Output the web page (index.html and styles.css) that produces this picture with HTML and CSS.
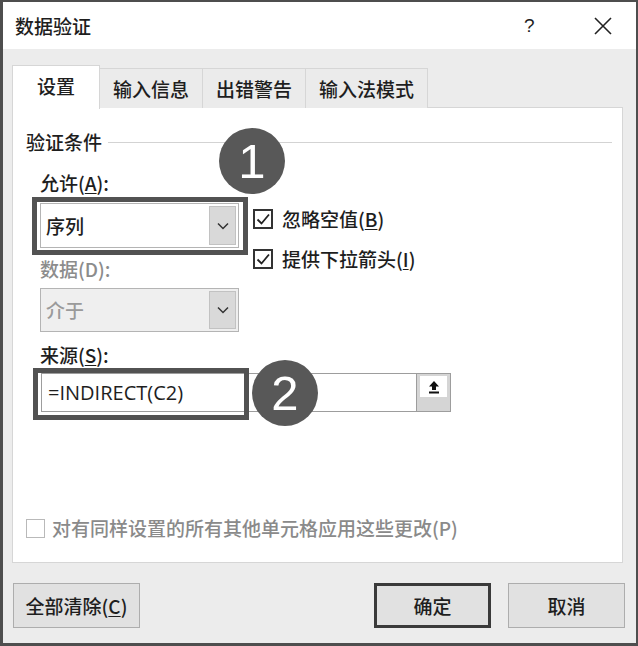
FILE: index.html
```html
<!DOCTYPE html>
<html lang="zh-CN">
<head>
<meta charset="utf-8">
<title>数据验证</title>
<link rel="stylesheet" href="styles.css">
</head>
<body>
<div class="window">
  <div class="titlebar">
    <span class="title">数据验证</span>
    <span class="help">?</span>
    <span class="close">
      <svg width="18" height="18" viewBox="0 0 18 18"><path d="M1 1L17 17M17 1L1 17" stroke="#222" stroke-width="1.6" fill="none"/></svg>
    </span>
  </div>
  <div class="body">
    <div class="tabs">
      <div class="tab active">设置</div>
      <div class="tab">输入信息</div>
      <div class="tab">出错警告</div>
      <div class="tab">输入法模式</div>
    </div>
    <div class="panel">
      <div class="group-head"><span>验证条件</span><span class="rule"></span></div>
      <div class="label">允许(<u>A</u>):</div>
      <div class="row">
        <div class="combo">
          <span class="combo-text">序列</span>
          <span class="combo-btn"><svg width="12" height="8" viewBox="0 0 12 8"><path d="M1 1.5L6 6.5L11 1.5" stroke="#333" stroke-width="1.5" fill="none"/></svg></span>
        </div>
        <div class="checks">
          <label class="check"><span class="box"><svg width="16" height="16" viewBox="0 0 16 16"><path d="M2.5 8.5L6.5 12.5L14 3.5" stroke="#222" stroke-width="1.8" fill="none"/></svg></span>忽略空值(<u>B</u>)</label>
          <label class="check"><span class="box"><svg width="16" height="16" viewBox="0 0 16 16"><path d="M2.5 8.5L6.5 12.5L14 3.5" stroke="#222" stroke-width="1.8" fill="none"/></svg></span>提供下拉箭头(<u>I</u>)</label>
        </div>
      </div>
      <div class="label disabled-label">数据(D):</div>
      <div class="combo disabled">
        <span class="combo-text">介于</span>
        <span class="combo-btn"><svg width="12" height="8" viewBox="0 0 12 8"><path d="M1 1.5L6 6.5L11 1.5" stroke="#333" stroke-width="1.5" fill="none"/></svg></span>
      </div>
      <div class="label src-label">来源(<u>S</u>):</div>
      <div class="source">
        <span class="source-text">=INDIRECT(C2)</span>
        <span class="source-btn"><span class="arrow-cell"><svg width="14" height="14" viewBox="0 0 14 14"><path d="M7 1L2 6.5H5V10H9V6.5H12Z" fill="#111"/><rect x="2" y="11.5" width="10" height="2" fill="#111"/></svg></span></span>
      </div>
      <div class="apply">
        <span class="box light"></span>
        <span>对有同样设置的所有其他单元格应用这些更改(P)</span>
      </div>
      <div class="mark mark-1"></div>
      <div class="mark mark-2"></div>
      <div class="badge badge-1">1</div>
      <div class="badge badge-2">2</div>
    </div>
    <div class="footer">
      <button class="btn btn-clear">全部清除(<u>C</u>)</button>
      <span class="spacer"></span>
      <button class="btn btn-ok">确定</button>
      <button class="btn">取消</button>
    </div>
  </div>
</div>
</body>
</html>
```

FILE: styles.css
```css
* { box-sizing: border-box; }
html, body { margin: 0; padding: 0; }
body {
  width: 638px;
  height: 646px;
  overflow: hidden;
  font-family: "Noto Sans CJK SC", "Noto Sans", sans-serif;
  font-size: 19px;
  font-weight: 500;
  color: #1e1e1e;
  background: #ececec;
}
.window {
  width: 638px;
  height: 646px;
  border-style: solid;
  border-color: #4e4e4e;
  border-width: 2px 2px 3px 3px;
  display: flex;
  flex-direction: column;
}
.titlebar {
  height: 47px;
  background: #fff;
  display: flex;
  align-items: center;
  padding-left: 12px;
}
.title { line-height: 24px; flex: 1; }
.help {
  font-family: "Liberation Sans", sans-serif;
  font-size: 19px;
  font-weight: 400;
  width: 10px;
  margin-right: 60px;
}
.close { display: flex; margin-right: 24px; }
.body {
  flex: 1;
  background: #ececec;
  padding: 16px 13px 0 9px;
  display: flex;
  flex-direction: column;
}
.tabs { display: flex; align-items: flex-end; height: 43px; position: relative; z-index: 1; }
.tab {
  height: 40px;
  padding: 0 13px;
  border: 1px solid #d6d6d6;
  border-bottom: none;
  margin-left: -1px;
  background: #ebebeb;
  line-height: 40px;
  white-space: nowrap;
}
.tab.active {
  height: 44px;
  margin-left: 0;
  margin-bottom: -1px;
  padding: 0 24px;
  background: #fff;
  line-height: 40px;
  position: relative;
  z-index: 2;
}
.panel {
  position: relative;
  height: 456px;
  margin-top: -1px;
  background: #fff;
  border: 1px solid #d6d6d6;
  display: flex;
  flex-direction: column;
  padding-bottom: 22px;
}
.group-head {
  display: flex;
  align-items: center;
  margin-top: 22px;
  padding-left: 13px;
  line-height: 24px;
}
.rule { flex: 1; height: 1px; background: #d3d3d3; margin: 0 10px 0 6px; }
.label { line-height: 24px; height: 24px; padding-left: 27px; margin-top: 17px; }
.disabled-label { color: #8c8c8c; margin-top: 9px; }
.src-label { margin-top: 11px; }
.row { display: flex; align-items: flex-start; height: 45px; margin-top: 8px; }
.combo {
  width: 199px;
  height: 45px;
  flex-shrink: 0;
  margin-left: 27px;
  border: 1px solid #b4b4b4;
  background: #fff;
  display: flex;
  align-items: center;
  padding: 2px;
}
.combo-text { flex: 1; padding-left: 3px; line-height: 24px; }
.combo-btn {
  width: 27px;
  align-self: stretch;
  background: #d9d9d9;
  border: 1px solid #c2c2c2;
  display: flex;
  align-items: center;
  justify-content: center;
}
.combo.disabled { margin-top: 7px; background: #efefef; height: 44px; }
.combo.disabled .combo-text { color: #9a9a9a; }
.checks { display: flex; flex-direction: column; gap: 16px; margin: 4px 0 0 14px; }
.check { display: flex; align-items: center; height: 24px; line-height: 24px; white-space: nowrap; }
.box {
  width: 20px;
  height: 20px;
  flex-shrink: 0;
  border: 2px solid #333;
  margin-right: 9px;
  display: flex;
  align-items: center;
  justify-content: center;
  background: #fff;
}
.box.light { border: 1px solid #b9b9b9; width: 19px; height: 19px; margin-right: 7px; }
.source {
  width: 410px;
  height: 39px;
  margin: 6px 0 0 28px;
  border: 1px solid #9d9d9d;
  display: flex;
  align-items: center;
}
.source-text {
  flex: 1;
  padding-left: 6px;
  font-family: "Open Sans", "Noto Sans", sans-serif;
  font-weight: 400;
  font-size: 20px;
  line-height: 24px;
}
.source-btn {
  width: 34px;
  align-self: stretch;
  background: #d5d5d5;
  border-left: 1px solid #9d9d9d;
  padding: 2px 3px;
}
.arrow-cell {
  display: flex;
  align-items: center;
  justify-content: center;
  background: #fff;
  height: 21px;
}
.apply {
  margin-top: auto;
  display: flex;
  align-items: center;
  padding-left: 13px;
  color: #8a8a8a;
  line-height: 24px;
}
.mark {
  position: absolute;
  border: 5px solid #525252;
  z-index: 3;
}
.mark-1 { left: 19px; top: 89px; width: 216px; height: 58px; }
.mark-2 { left: 20px; top: 260px; width: 216px; height: 52px; }
.badge {
  position: absolute;
  width: 66px;
  height: 66px;
  border-radius: 50%;
  background: #585858;
  color: #fff;
  font-family: "Liberation Sans", sans-serif;
  font-weight: 400;
  font-size: 49px;
  line-height: 66px;
  text-align: center;
  z-index: 4;
}
.badge-1 { left: 206px; top: 20px; }
.badge-2 { left: 239px; top: 252px; }
.footer {
  display: flex;
  margin: 20px -2px 0 1px;
}
.spacer { flex: 1; }
.btn {
  font: inherit;
  color: #1e1e1e;
  height: 45px;
  width: 117px;
  padding: 0;
  background: #e1e1e1;
  border: 1px solid #adadad;
  line-height: 24px;
}
.btn-clear { width: 127px; }
.btn-ok { border: 3px solid #3a3a3a; margin-right: 17px; }
u { text-decoration-thickness: 1px; text-underline-offset: 2px; }
```
